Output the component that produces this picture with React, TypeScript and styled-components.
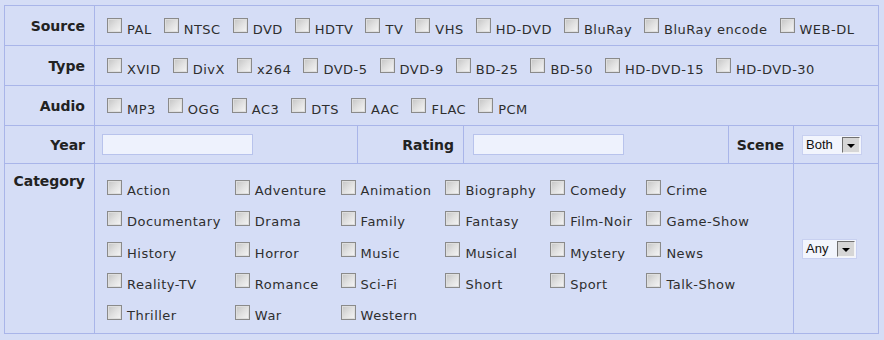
import styled, { createGlobalStyle } from "styled-components";

const bg = "#d5ddf6";
const line = "#a9b5e9";

const sources = ["PAL", "NTSC", "DVD", "HDTV", "TV", "VHS", "HD-DVD", "BluRay", "BluRay encode", "WEB-DL"];
const types = ["XVID", "DivX", "x264", "DVD-5", "DVD-9", "BD-25", "BD-50", "HD-DVD-15", "HD-DVD-30"];
const audios = ["MP3", "OGG", "AC3", "DTS", "AAC", "FLAC", "PCM"];
const categories = [
  "Action", "Adventure", "Animation", "Biography", "Comedy", "Crime",
  "Documentary", "Drama", "Family", "Fantasy", "Film-Noir", "Game-Show",
  "History", "Horror", "Music", "Musical", "Mystery", "News",
  "Reality-TV", "Romance", "Sci-Fi", "Short", "Sport", "Talk-Show",
  "Thriller", "War", "Western",
];

const Option = ({ text }: { text: string }) => (
  <Item>
    <Box type="checkbox" />
    <ItemText>{text}</ItemText>
  </Item>
);

const Dropdown = ({ value }: { value: string }) => (
  <Select>
    <SelectText>{value}</SelectText>
    <Arrow />
  </Select>
);

const App = () => {
  return (
    <>
      <GlobalStyle />
      <Page>
        <Form>
          <Label>Source</Label>
          <Options>
            {sources.map((s) => (
              <Option key={s} text={s} />
            ))}
          </Options>

          <Label>Type</Label>
          <Options>
            {types.map((s) => (
              <Option key={s} text={s} />
            ))}
          </Options>

          <Label>Audio</Label>
          <Options>
            {audios.map((s) => (
              <Option key={s} text={s} />
            ))}
          </Options>

          <Label>Year</Label>
          <Field $pad={7}>
            <TextInput />
          </Field>
          <Label>Rating</Label>
          <Field $pad={9}>
            <TextInput />
          </Field>
          <Label>Scene</Label>
          <Field $pad={8}>
            <Dropdown value="Both" />
          </Field>

          <Label $top>Category</Label>
          <CategoryCell>
            <CategoryGrid>
              {categories.map((c) => (
                <Option key={c} text={c} />
              ))}
            </CategoryGrid>
          </CategoryCell>
          <Field $pad={8}>
            <Dropdown value="Any" />
          </Field>
        </Form>
      </Page>
    </>
  );
};

export default App;

const GlobalStyle = createGlobalStyle`
  body {
    margin: 0;
    background: ${bg};
    font-family: "DejaVu Sans", Verdana, sans-serif;
  }
`;

const Page = styled.div`
  padding: 5px 0 0 4px;
`;

const Form = styled.div`
  display: grid;
  grid-template-columns: 89px 262px 105px 264px 64px 84px;
  grid-template-rows: 39px 39px 39px 37px 169px;
  gap: 1px;
  width: fit-content;
  background: ${line};
  border: 1px solid ${line};
`;

const Cell = styled.div`
  background: ${bg};
  display: flex;
  align-items: center;
  min-width: 0;
`;

const Label = styled(Cell)<{ $top?: boolean }>`
  justify-content: flex-end;
  align-items: ${(p) => (p.$top ? "flex-start" : "center")};
  padding: ${(p) => (p.$top ? "9px" : "0")} 9px 0 0;
  font-size: 14px;
  font-weight: 700;
  color: #222;
`;

const Options = styled(Cell)`
  grid-column: 2 / span 5;
  padding-left: 12px;
  gap: 12px;
  white-space: nowrap;
`;

const Field = styled(Cell)<{ $pad: number }>`
  padding-left: ${(p) => p.$pad}px;
`;

const CategoryCell = styled(Cell)`
  grid-column: 2 / span 4;
  align-items: flex-start;
  padding: 12px 0 0 12px;
`;

const CategoryGrid = styled.div`
  display: grid;
  grid-template-columns: repeat(6, auto);
  column-gap: 14px;
  row-gap: 9.3px;
`;

const Item = styled.label`
  display: inline-flex;
  align-items: center;
  height: 22px;
  font-size: 13px;
  letter-spacing: 0.5px;
  color: #2e2e2e;
  white-space: nowrap;
`;

const Box = styled.input`
  appearance: none;
  box-sizing: border-box;
  width: 15px;
  height: 15px;
  margin: 0 5px 0 0;
  border: 1px solid #8a8a8a;
  background: linear-gradient(135deg, #c4c4c4 0%, #e0e0e0 50%, #f6f6f6 100%);
  box-shadow: inset 0 0 0 1px #dedede;
`;

const ItemText = styled.span`
  padding-top: 7px;
`;

const TextInput = styled.input`
  box-sizing: border-box;
  width: 151px;
  height: 21px;
  margin: 0;
  border: 1px solid #b8c3ec;
  background: #eef2fd;
`;

const Select = styled.div`
  display: inline-flex;
  align-items: center;
  box-sizing: border-box;
  height: 20px;
  padding: 0 1px 0 3px;
  background: #f2f5fd;
  border: 1px solid #c8d0f0;
  font-family: "Liberation Sans", Arial, sans-serif;
  font-size: 13px;
  color: #111;
`;

const SelectText = styled.span`
  margin-right: 9px;
`;

const Arrow = styled.span`
  position: relative;
  box-sizing: border-box;
  width: 18px;
  height: 16px;
  background: #d6d6d6;
  border-top: 1px solid #707070;
  border-left: 1px solid #707070;
  border-right: 1px solid #f4f4f4;
  border-bottom: 1px solid #f4f4f4;

  &::after {
    content: "";
    position: absolute;
    left: 4px;
    top: 6px;
    border-left: 4px solid transparent;
    border-right: 4px solid transparent;
    border-top: 4px solid #000;
  }
`;
